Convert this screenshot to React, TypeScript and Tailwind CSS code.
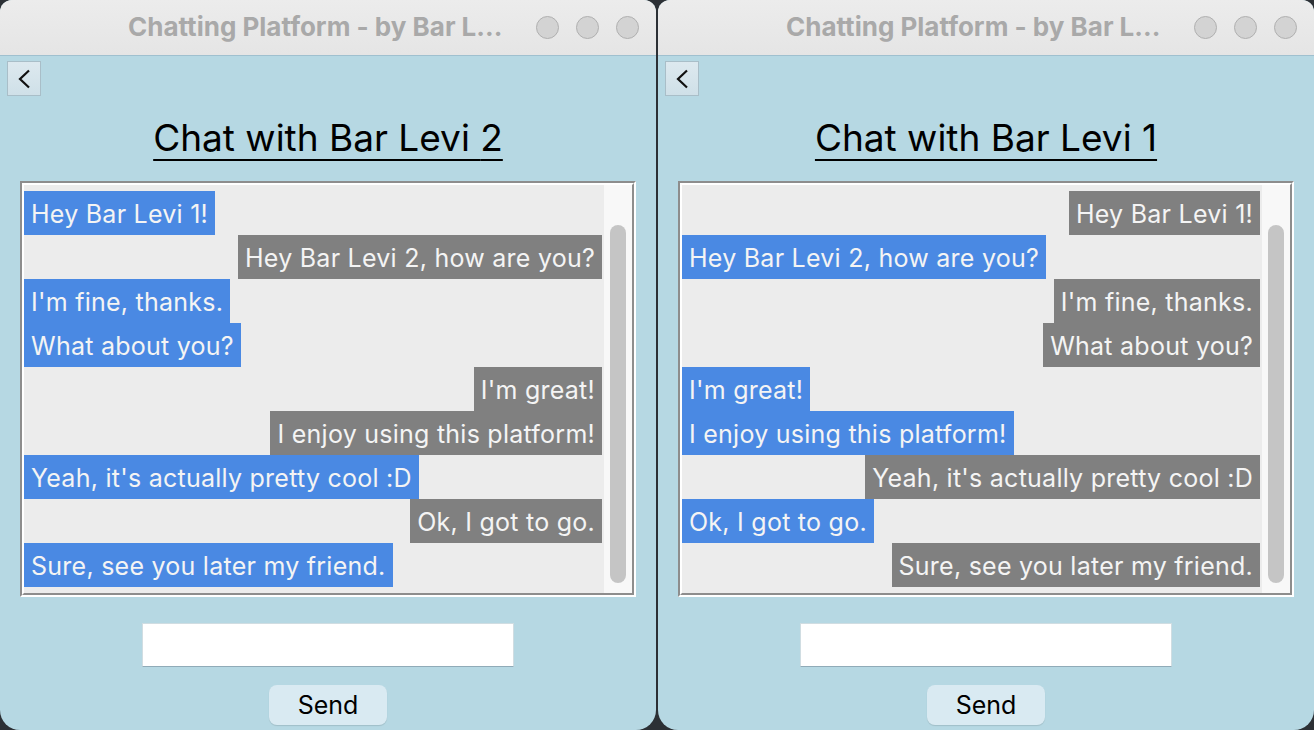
import React from "react";

type Message = { text: string; from: 1 | 2 };

const messages: Message[] = [
  { text: "Hey Bar Levi 1!", from: 1 },
  { text: "Hey Bar Levi 2, how are you?", from: 2 },
  { text: "I'm fine, thanks.", from: 1 },
  { text: "What about you?", from: 1 },
  { text: "I'm great!", from: 2 },
  { text: "I enjoy using this platform!", from: 2 },
  { text: "Yeah, it's actually pretty cool :D", from: 1 },
  { text: "Ok, I got to go.", from: 2 },
  { text: "Sure, see you later my friend.", from: 1 },
];

function TitleBar() {
  return (
    <div className="flex h-[56px] items-center border-b border-[#9fc0cf] bg-gradient-to-b from-[#ececec] to-[#e5e5e5] pl-[128px] pr-[17px]">
      <span className="pb-[2px] text-[26px] font-bold text-[#a9a9a9]">
        Chatting Platform - by Bar L...
      </span>
      <div className="ml-auto flex gap-[17px]">
        {[0, 1, 2].map((i) => (
          <span
            key={i}
            className="h-[23px] w-[23px] rounded-full border border-[#b0b0b0] bg-[#d3d3d3]"
          />
        ))}
      </div>
    </div>
  );
}

function ChatWindow({ me, other }: { me: 1 | 2; other: 1 | 2 }) {
  return (
    <div className="flex h-[730px] w-[656px] shrink-0 flex-col overflow-hidden rounded-t-[12px] rounded-b-[20px] bg-[#b6d8e3]">
      <TitleBar />

      <div className="pl-[7px] pt-[5px]">
        <button className="flex h-[35px] w-[34px] items-center justify-center border border-[#a9bec8] bg-gradient-to-b from-[#dde9ef] to-[#cfe0e8]">
          <svg width="14" height="20" viewBox="0 0 14 20" fill="none">
            <path d="M12 1.5 L3 10 L12 18.5" stroke="#111" strokeWidth="2.2" />
          </svg>
        </button>
      </div>

      <h1 className="mt-[20px] text-center text-[37px] leading-[44px] text-black underline decoration-2 underline-offset-[8px]">
        Chat with Bar Levi {other}
      </h1>

      <div className="mx-[20px] mt-[21px] h-[416px] border-2 border-t-[#8d8d8d] border-l-[#8d8d8d] border-r-white border-b-white">
        <div className="flex h-full border-2 border-t-white border-l-white border-r-[#8d8d8d] border-b-[#8d8d8d]">
          <div className="flex flex-1 flex-col bg-[#ececec] pr-[2px] pt-[6px]">
            {messages.map((m, i) => {
              const mine = m.from === me;
              return (
                <div key={i} className={`flex h-[44px] ${mine ? "justify-start" : "justify-end"}`}>
                  <span
                    className={`flex items-center px-[7px] pt-[3px] text-[25px] tracking-[0.25px] text-[#f4f4f4] ${
                      mine ? "bg-[#4a89e3]" : "bg-[#808080]"
                    }`}
                  >
                    {m.text}
                  </span>
                </div>
              );
            })}
          </div>
          <div className="flex w-[28px] justify-center bg-[#f8f8f8] pt-[40px] pb-[5px]">
            <div className="h-[358px] w-[16px] rounded-full bg-[#c5c5c5]" />
          </div>
        </div>
      </div>

      <div className="mt-[26px] flex justify-center">
        <input
          className="h-[44px] w-[372px] border border-[#d0dde2] border-b-[#90abb8] bg-white outline-none"
          aria-label="message"
        />
      </div>

      <div className="mt-[18px] flex justify-center">
        <button className="h-[40px] w-[118px] rounded-[8px] bg-[#d9eaf2] pt-[2px] text-[25px] text-black shadow-[0_1px_1px_rgba(0,0,0,0.12)]">
          Send
        </button>
      </div>
    </div>
  );
}

export default function App() {
  return (
    <div
      className="flex h-[730px] w-[1314px] gap-[2px] overflow-hidden bg-[#2c3035]"
      style={{ fontFamily: "Inter, 'Noto Sans', sans-serif" }}
    >
      <ChatWindow me={1} other={2} />
      <ChatWindow me={2} other={1} />
    </div>
  );
}
